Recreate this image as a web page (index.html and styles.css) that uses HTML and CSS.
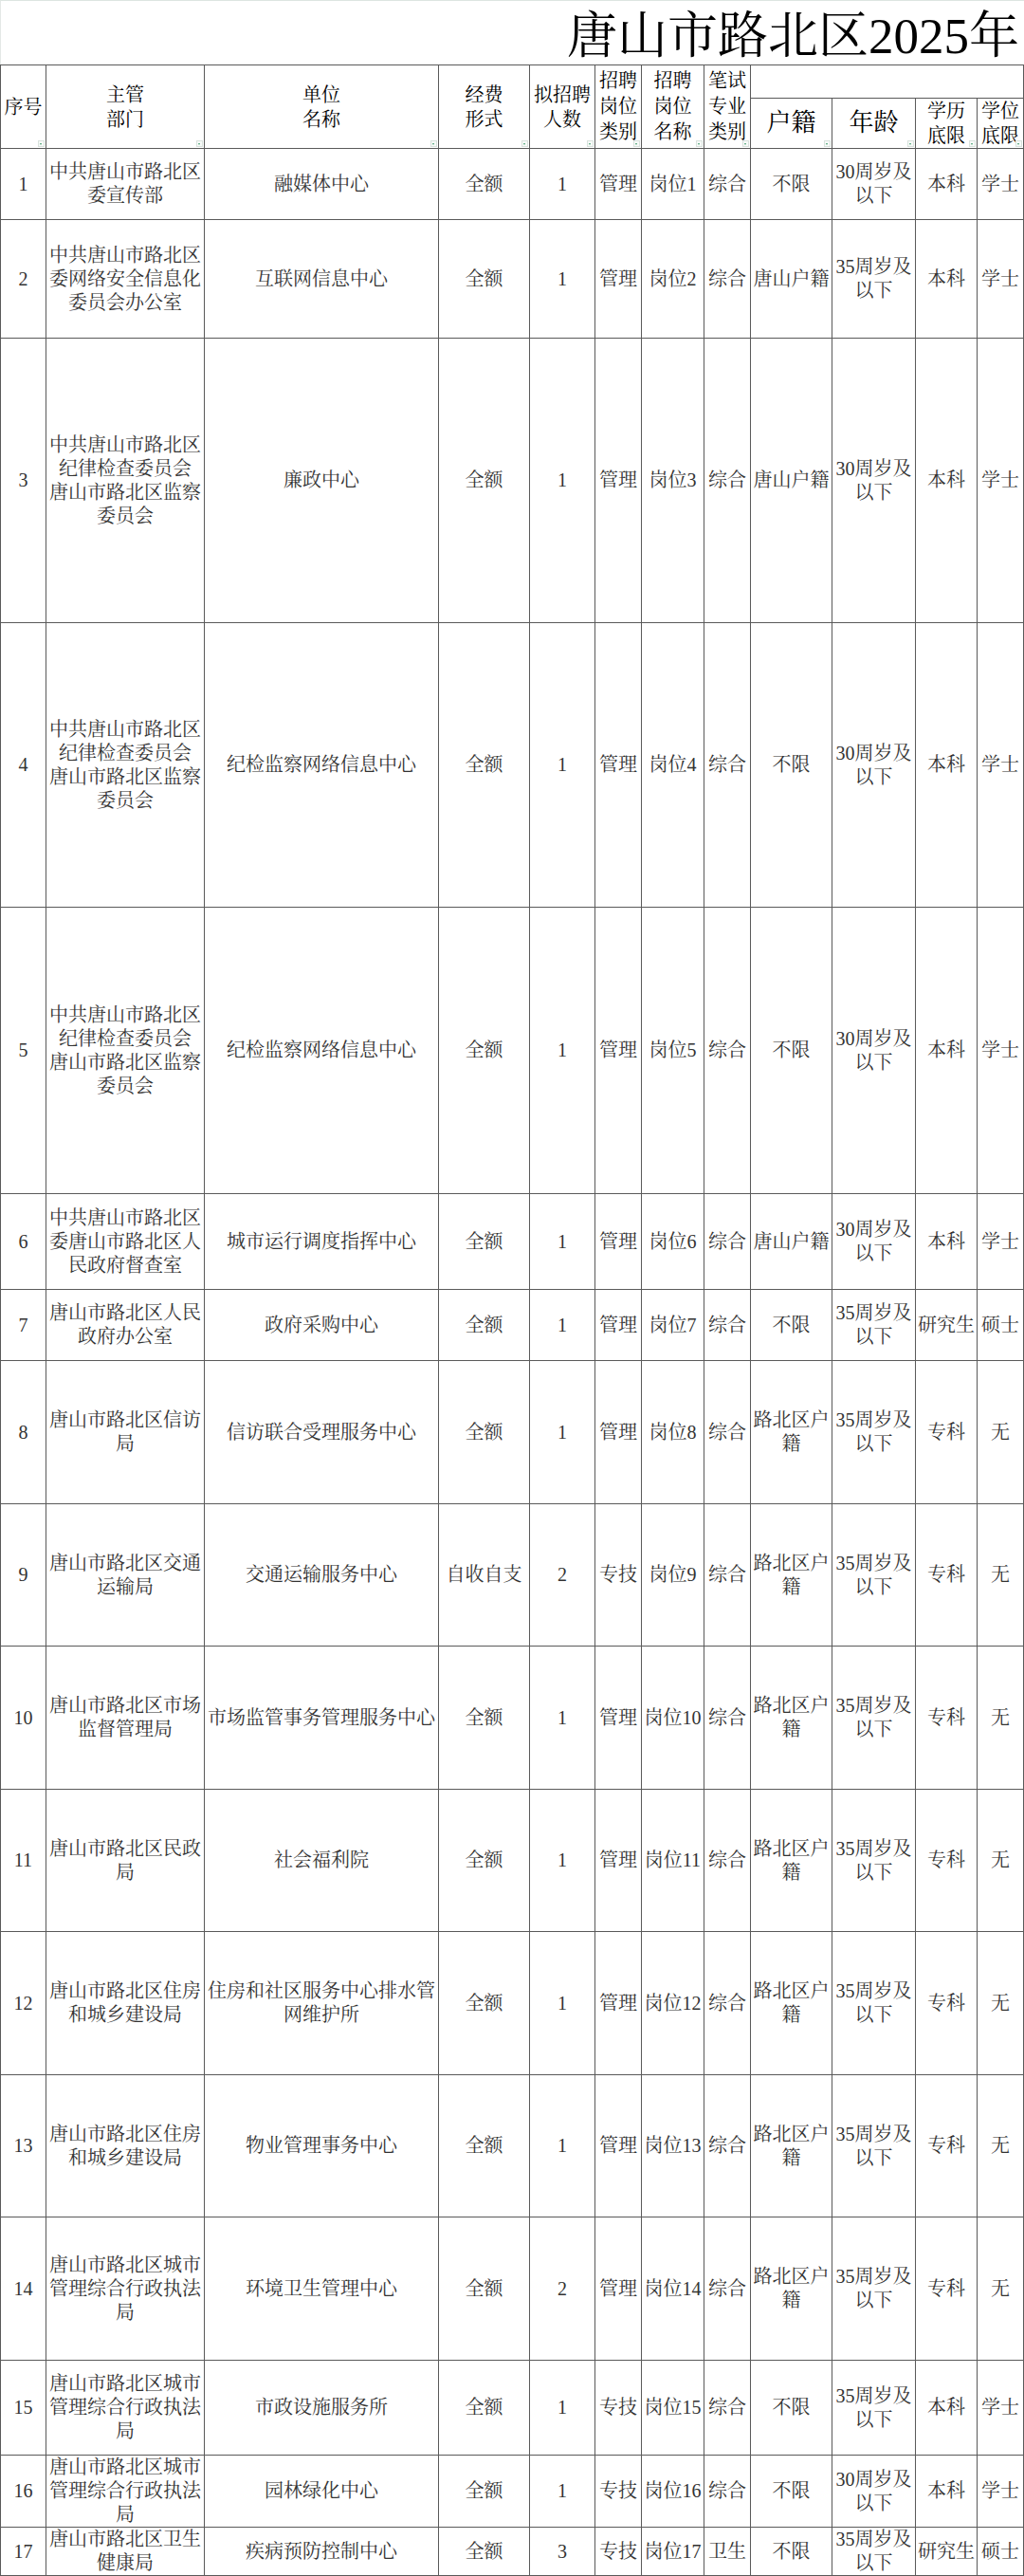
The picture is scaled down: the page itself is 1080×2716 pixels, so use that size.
FILE: index.html
```html
<!DOCTYPE html>
<html lang="zh-CN">
<head>
<meta charset="utf-8">
<title>唐山市路北区2025年</title>
<link rel="stylesheet" href="styles.css">
</head>
<body>
<div class="sheet">
  <div class="title">唐山市路北区2025年</div>
  <table class="grid">
    <colgroup>
      <col class="w-no"><col class="w-dept"><col class="w-unit"><col class="w-fund"><col class="w-num">
      <col class="w-type"><col class="w-post"><col class="w-exam"><col class="w-huji"><col class="w-age">
      <col class="w-edu"><col class="w-deg">
    </colgroup>
    <thead>
      <tr class="hr1">
        <th rowspan="2">序号<i class="flt"></i></th>
        <th rowspan="2">主管<br>部门<i class="flt"></i></th>
        <th rowspan="2">单位<br>名称<i class="flt"></i></th>
        <th rowspan="2">经费<br>形式<i class="flt"></i></th>
        <th rowspan="2">拟招聘<br>人数<i class="flt"></i></th>
        <th rowspan="2" class="tri">招聘<br>岗位<br>类别<i class="flt"></i></th>
        <th rowspan="2" class="tri">招聘<br>岗位<br>名称<i class="flt"></i></th>
        <th rowspan="2" class="tri">笔试<br>专业<br>类别<i class="flt"></i></th>
        <th colspan="4"></th>
      </tr>
      <tr class="hr2">
        <th class="big">户籍<i class="flt"></i></th>
        <th class="big">年龄<i class="flt"></i></th>
        <th>学历<br>底限<i class="flt"></i></th>
        <th>学位<br>底限<i class="flt"></i></th>
      </tr>
    </thead>
    <tbody>
      <tr class="h75">
        <td>1</td><td>中共唐山市路北区委宣传部</td><td>融媒体中心</td><td>全额</td><td>1</td>
        <td>管理</td><td>岗位1</td><td>综合</td><td>不限</td><td>30周岁及以下</td><td>本科</td><td>学士</td>
      </tr>
      <tr class="h125">
        <td>2</td><td>中共唐山市路北区委网络安全信息化委员会办公室</td><td>互联网信息中心</td><td>全额</td><td>1</td>
        <td>管理</td><td>岗位2</td><td>综合</td><td>唐山户籍</td><td>35周岁及以下</td><td>本科</td><td>学士</td>
      </tr>
      <tr class="h300">
        <td>3</td><td>中共唐山市路北区<br>纪律检查委员会<br>唐山市路北区监察<br>委员会</td><td>廉政中心</td><td>全额</td><td>1</td>
        <td>管理</td><td>岗位3</td><td>综合</td><td>唐山户籍</td><td>30周岁及以下</td><td>本科</td><td>学士</td>
      </tr>
      <tr class="h300">
        <td>4</td><td>中共唐山市路北区<br>纪律检查委员会<br>唐山市路北区监察<br>委员会</td><td>纪检监察网络信息中心</td><td>全额</td><td>1</td>
        <td>管理</td><td>岗位4</td><td>综合</td><td>不限</td><td>30周岁及以下</td><td>本科</td><td>学士</td>
      </tr>
      <tr class="h302">
        <td>5</td><td>中共唐山市路北区<br>纪律检查委员会<br>唐山市路北区监察<br>委员会</td><td>纪检监察网络信息中心</td><td>全额</td><td>1</td>
        <td>管理</td><td>岗位5</td><td>综合</td><td>不限</td><td>30周岁及以下</td><td>本科</td><td>学士</td>
      </tr>
      <tr class="h101">
        <td>6</td><td>中共唐山市路北区委唐山市路北区人民政府督查室</td><td>城市运行调度指挥中心</td><td>全额</td><td>1</td>
        <td>管理</td><td>岗位6</td><td>综合</td><td>唐山户籍</td><td>30周岁及以下</td><td>本科</td><td>学士</td>
      </tr>
      <tr class="h75">
        <td>7</td><td>唐山市路北区人民政府办公室</td><td>政府采购中心</td><td>全额</td><td>1</td>
        <td>管理</td><td>岗位7</td><td>综合</td><td>不限</td><td>35周岁及以下</td><td>研究生</td><td>硕士</td>
      </tr>
      <tr class="h151">
        <td>8</td><td>唐山市路北区信访局</td><td>信访联合受理服务中心</td><td>全额</td><td>1</td>
        <td>管理</td><td>岗位8</td><td>综合</td><td>路北区户籍</td><td>35周岁及以下</td><td>专科</td><td>无</td>
      </tr>
      <tr class="h150">
        <td>9</td><td>唐山市路北区交通运输局</td><td>交通运输服务中心</td><td>自收自支</td><td>2</td>
        <td>专技</td><td>岗位9</td><td>综合</td><td>路北区户籍</td><td>35周岁及以下</td><td>专科</td><td>无</td>
      </tr>
      <tr class="h151">
        <td>10</td><td>唐山市路北区市场监督管理局</td><td>市场监管事务管理服务中心</td><td>全额</td><td>1</td>
        <td>管理</td><td>岗位10</td><td>综合</td><td>路北区户籍</td><td>35周岁及以下</td><td>专科</td><td>无</td>
      </tr>
      <tr class="h150">
        <td>11</td><td>唐山市路北区民政局</td><td>社会福利院</td><td>全额</td><td>1</td>
        <td>管理</td><td>岗位11</td><td>综合</td><td>路北区户籍</td><td>35周岁及以下</td><td>专科</td><td>无</td>
      </tr>
      <tr class="h151">
        <td>12</td><td>唐山市路北区住房和城乡建设局</td><td>住房和社区服务中心排水管网维护所</td><td>全额</td><td>1</td>
        <td>管理</td><td>岗位12</td><td>综合</td><td>路北区户籍</td><td>35周岁及以下</td><td>专科</td><td>无</td>
      </tr>
      <tr class="h150">
        <td>13</td><td>唐山市路北区住房和城乡建设局</td><td>物业管理事务中心</td><td>全额</td><td>1</td>
        <td>管理</td><td>岗位13</td><td>综合</td><td>路北区户籍</td><td>35周岁及以下</td><td>专科</td><td>无</td>
      </tr>
      <tr class="h151">
        <td>14</td><td>唐山市路北区城市管理综合行政执法局</td><td>环境卫生管理中心</td><td>全额</td><td>2</td>
        <td>管理</td><td>岗位14</td><td>综合</td><td>路北区户籍</td><td>35周岁及以下</td><td>专科</td><td>无</td>
      </tr>
      <tr class="h100">
        <td>15</td><td>唐山市路北区城市管理综合行政执法局</td><td>市政设施服务所</td><td>全额</td><td>1</td>
        <td>专技</td><td>岗位15</td><td>综合</td><td>不限</td><td>35周岁及以下</td><td>本科</td><td>学士</td>
      </tr>
      <tr class="h76">
        <td>16</td><td>唐山市路北区城市管理综合行政执法局</td><td>园林绿化中心</td><td>全额</td><td>1</td>
        <td>专技</td><td>岗位16</td><td>综合</td><td>不限</td><td>30周岁及以下</td><td>本科</td><td>学士</td>
      </tr>
      <tr class="h50">
        <td>17</td><td>唐山市路北区卫生健康局</td><td>疾病预防控制中心</td><td>全额</td><td>3</td>
        <td>专技</td><td>岗位17</td><td>卫生</td><td>不限</td><td>35周岁及以下</td><td>研究生</td><td>硕士</td>
      </tr>
    </tbody>
  </table>
</div>
</body>
</html>
```

FILE: styles.css
```css
html, body {
  margin: 0;
  padding: 0;
  background: #ffffff;
}

body {
  width: 1080px;
  height: 2716px;
  overflow: hidden;
  font-family: "Liberation Serif", "Noto Serif CJK SC", "Noto Sans CJK SC", serif;
}

.sheet {
  width: 1080px;
}

.title {
  box-sizing: border-box;
  height: 68px;
  border-top: 1px solid #dde5e1;
  border-left: 1px solid #e4e8e6;
  padding-left: 597px;
  font-size: 53px;
  line-height: 74px;
  color: #000;
  white-space: nowrap;
  overflow: hidden;
}

.grid {
  border-collapse: collapse;
  table-layout: fixed;
  width: 1080px;
}

.grid th,
.grid td {
  border: 1px solid #5a5a5a;
  padding: 0;
  text-align: center;
  vertical-align: middle;
  font-size: 20px;
  overflow: hidden;
}

.grid th {
  position: relative;
  font-weight: normal;
  color: #000;
  line-height: 26px;
}

.grid th.tri {
  line-height: 27px;
}

.grid th.big {
  font-size: 26px;
}

.grid td {
  color: #333;
  line-height: 25px;
}

.w-no { width: 48px; }
.w-dept { width: 167px; }
.w-unit { width: 247px; }
.w-fund { width: 96px; }
.w-num { width: 69px; }
.w-type { width: 49px; }
.w-post { width: 66px; }
.w-exam { width: 49px; }
.w-huji { width: 86px; }
.w-age { width: 88px; }
.w-edu { width: 65px; }
.w-deg { width: 49px; }

.hr1 { height: 35px; }
.hr2 { height: 53px; }
.h50 { height: 50px; }
.h75 { height: 75px; }
.h76 { height: 76px; }
.h100 { height: 100px; }
.h101 { height: 101px; }
.h125 { height: 125px; }
.h150 { height: 150px; }
.h151 { height: 151px; }
.h300 { height: 300px; }
.h302 { height: 302px; }

.flt {
  position: absolute;
  right: 1px;
  bottom: 1px;
  width: 5px;
  height: 5px;
  border: 1px solid #d9e2dd;
  background: #f7faf8;
}

.flt::after {
  content: "";
  position: absolute;
  left: 1px;
  top: 2px;
  border-left: 1.5px solid transparent;
  border-right: 1.5px solid transparent;
  border-top: 2px solid #3c9a6a;
}
```
